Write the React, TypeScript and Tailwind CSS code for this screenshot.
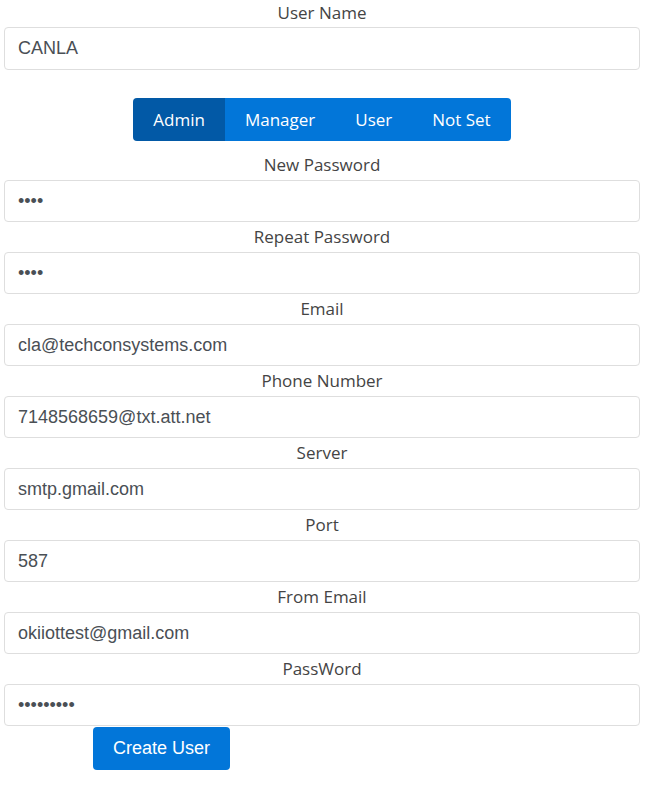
import React from 'react';

const fields = [
  { label: 'New Password', value: '••••' },
  { label: 'Repeat Password', value: '••••' },
  { label: 'Email', value: 'cla@techconsystems.com' },
  { label: 'Phone Number', value: '7148568659@txt.att.net' },
  { label: 'Server', value: 'smtp.gmail.com' },
  { label: 'Port', value: '587' },
  { label: 'From Email', value: 'okiiottest@gmail.com' },
  { label: 'PassWord', value: '•••••••••' },
];

const roles = ['Admin', 'Manager', 'User', 'Not Set'];

function Field({ label, value, first }: { label: string; value: string; first?: boolean }) {
  return (
    <div className="flex flex-col">
      <div
        className={`text-center text-[17px] leading-6 text-[#444] ${first ? 'pt-px pb-[2px]' : 'py-[3px]'}`}
        style={{ fontFamily: '"Open Sans", sans-serif' }}
      >
        {label}
      </div>
      <div
        className={`${first ? 'h-[43px]' : 'h-[42px]'} border border-[#dedede] rounded-[4px] bg-white flex items-center px-[13px] text-[18px] text-[#4a4f55]`}
        style={{ fontFamily: '"Liberation Sans", Arial, sans-serif' }}
      >
        {value}
      </div>
    </div>
  );
}

export default function App() {
  return (
    <div className="w-[650px] min-h-[786px] bg-white">
      <div className="ml-[4px] w-[636px] flex flex-col">
        <Field label="User Name" value="CANLA" first />
        <div className="flex justify-center mt-[28px] mb-[9px]">
          <div
            className="flex h-[43px] rounded-[4px] overflow-hidden text-[17px] text-white"
            style={{ fontFamily: '"Open Sans", sans-serif' }}
          >
            {roles.map((r, i) => (
              <div
                key={r}
                className={`px-5 flex items-center ${i === 0 ? 'bg-[#0259a6]' : 'bg-[#0276d9]'}`}
              >
                {r}
              </div>
            ))}
          </div>
        </div>
        {fields.map((f) => (
          <Field key={f.label} label={f.label} value={f.value} />
        ))}
        <div className="pl-[89px] pt-px">
          <button
            className="h-[43px] px-5 rounded-[4px] bg-[#0276d9] text-white text-[18px]"
            style={{ fontFamily: '"Liberation Sans", Arial, sans-serif' }}
          >
            Create User
          </button>
        </div>
      </div>
    </div>
  );
}
